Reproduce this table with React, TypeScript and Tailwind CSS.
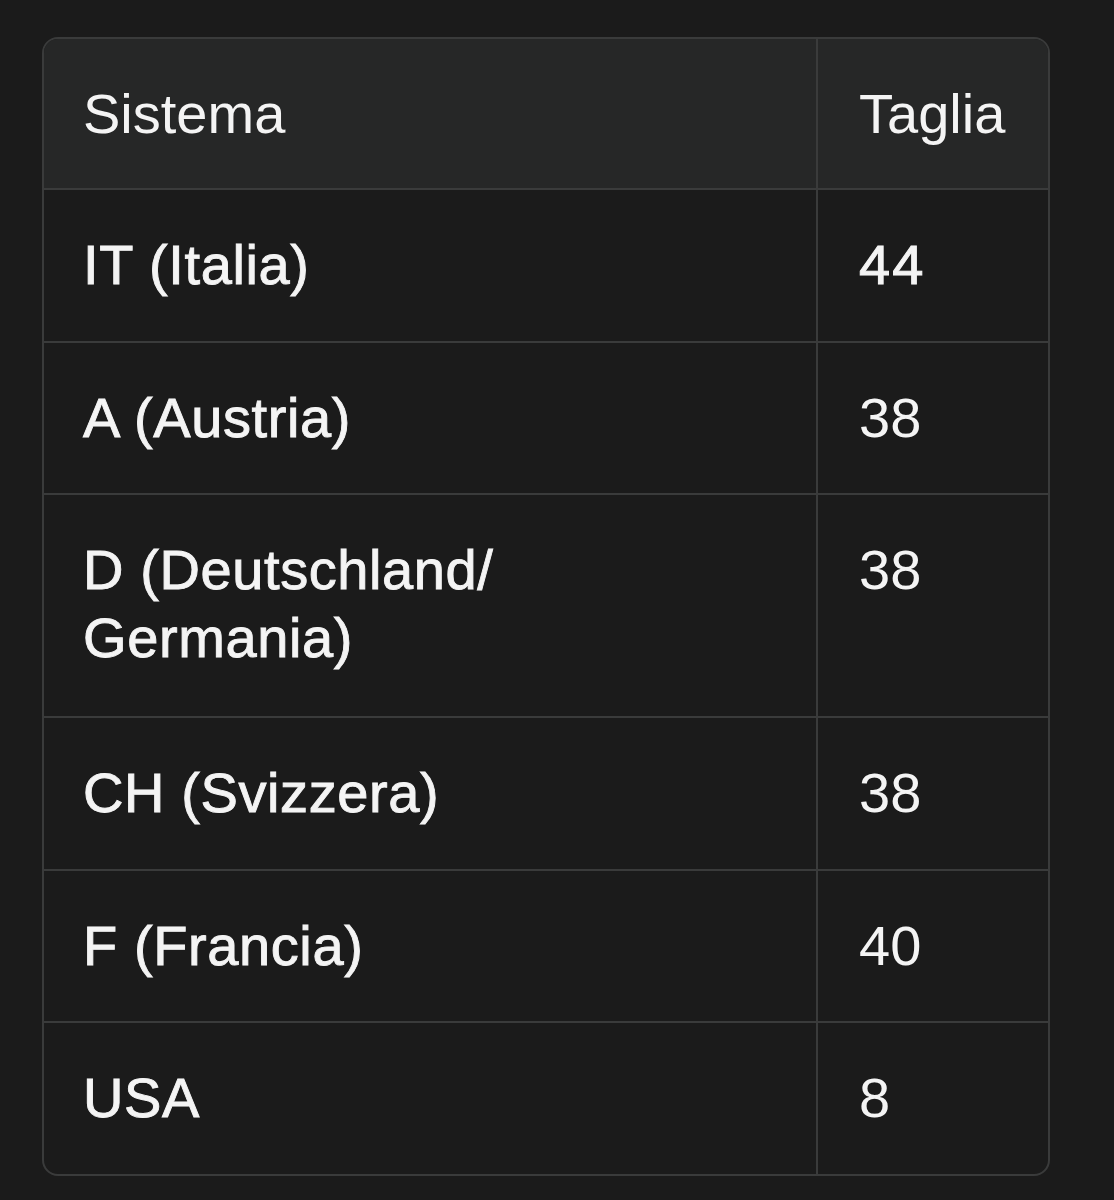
import React from "react";

const rows: { label: string; value: string; bold?: boolean; extra?: boolean }[] = [
  { label: "IT (Italia)", value: "44", bold: true },
  { label: "A (Austria)", value: "38" },
  { label: "D (Deutschland/ Germania)", value: "38", extra: true },
  { label: "CH (Svizzera)", value: "38" },
  { label: "F (Francia)", value: "40" },
  { label: "USA", value: "8" },
];

export default function App() {
  return (
    <div
      className="min-h-[1200px] w-full bg-[#1b1b1b] pt-[37px] pl-[42px]"
      style={{ fontFamily: '"Liberation Sans", Arial, sans-serif' }}
    >
      <div className="w-[1008px] overflow-hidden rounded-[16px] border-2 border-[#3a3b3b] text-[56px] leading-[68px] text-[#f4f4f4]">
        <div className="grid grid-cols-[774px_1fr]">
          <div className="border-b-2 border-r-2 border-[#3a3b3b] bg-[#262727] px-[39px] pt-[41px] pb-[40px] font-normal">
            Sistema
          </div>
          <div className="border-b-2 border-[#3a3b3b] bg-[#262727] px-[41px] pt-[41px] pb-[40px] font-normal">
            Taglia
          </div>
          {rows.map((r, i) => {
            const last = i === rows.length - 1;
            return (
              <React.Fragment key={r.label}>
                <div
                  className={`border-r-2 border-[#3a3b3b] px-[39px] pt-[41px] font-normal tracking-[0.6px] [-webkit-text-stroke:0.9px_#f4f4f4] ${
                    r.extra ? "pb-[44px]" : "pb-[41.6px]"
                  } ${last ? "" : "border-b-2"}`}
                >
                  {r.label === "D (Deutschland/ Germania)" ? (
                    <>
                      D (Deutschland/
                      <br />
                      Germania)
                    </>
                  ) : (
                    r.label
                  )}
                </div>
                <div
                  className={`border-[#3a3b3b] px-[41px] pt-[41px] font-normal ${
                    r.bold ? "tracking-[2px] [-webkit-text-stroke:1px_#f4f4f4]" : ""
                  } ${r.extra ? "pb-[44px]" : "pb-[41.6px]"} ${last ? "" : "border-b-2"}`}
                >
                  {r.value}
                </div>
              </React.Fragment>
            );
          })}
        </div>
      </div>
    </div>
  );
}
